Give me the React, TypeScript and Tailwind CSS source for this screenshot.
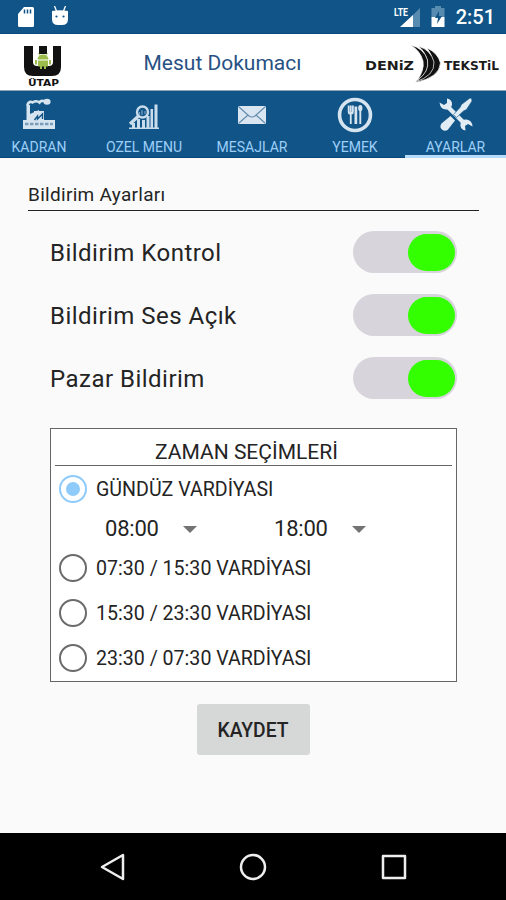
import { useState } from 'react';
import type { ReactNode } from 'react';

interface Tab {
  label: string;
  width: string;
  icon: ReactNode;
}

const tabs: Tab[] = [
  { label: 'KADRAN', width: 'w-[100px]', icon: <FactoryIcon /> },
  { label: 'OZEL MENU', width: 'w-[110px]', icon: <ChartIcon /> },
  { label: 'MESAJLAR', width: 'w-[106px]', icon: <MailIcon /> },
  { label: 'YEMEK', width: 'w-[100px]', icon: <MealIcon /> },
  { label: 'AYARLAR', width: 'w-[101px]', icon: <ToolsIcon /> },
];

const shifts = [
  '07:30 / 15:30 VARDİYASI',
  '15:30 / 23:30 VARDİYASI',
  '23:30 / 07:30 VARDİYASI',
];

function FactoryIcon() {
  return (
    <svg width="34" height="34" viewBox="0 0 34 34" fill="#d6e4f0">
      <path d="M1 22h3.500V7H8v9l9-4v4l2 6h14v9H1z" />
      <path d="M12 13h10v9H12z" />
      <path d="M5.500 6.500q2-4 5-2 4-2.500 7 0 1-2 4-1.500" fill="none" stroke="#d6e4f0" strokeWidth="2.600" strokeLinecap="round" />
      <ellipse cx="25" cy="3.800" rx="3.600" ry="3" />
      <path d="M3 26h28" stroke="#7b9cb9" strokeWidth="2.500" strokeDasharray="3.500 1.500" />
      <path d="m12.500 22 3-4v3l5-5v5" stroke="#115588" strokeWidth="1.400" fill="none" />
    </svg>
  );
}

function ChartIcon() {
  return (
    <svg width="34" height="34" viewBox="0 0 34 34" fill="#c9dcec">
      <path d="M2 29.500h30V31H2zM5 25h3v5H5zM10 21h3v9h-3zM15 22h3v8h-3zM19.500 18h3v12h-3zM23.500 11h2.500v19h-2.500zM27.500 6.500h3V30h-3z" />
      <circle cx="15.500" cy="14" r="5.500" fill="#115588" stroke="#c9dcec" strokeWidth="2.400" />
      <path d="m11.500 18-8.500 8" stroke="#c9dcec" strokeWidth="3.200" />
      <path d="M12.500 16.500V14m2.500 3v-5m3 4v-3" stroke="#7ba2c2" strokeWidth="1.200" />
    </svg>
  );
}

function MailIcon() {
  return (
    <svg width="34" height="34" viewBox="0 0 34 34">
      <rect x="3" y="8" width="28" height="18" rx="1.500" fill="#d9e6f1" />
      <path d="m4 9 10 9q3 2 6 0l10-9M4 25l9-8m8 0 9 8" fill="none" stroke="#648aab" strokeWidth="1.100" />
    </svg>
  );
}

function MealIcon() {
  return (
    <svg width="36" height="36" viewBox="0 0 34 34" fill="none" stroke="#d6e4f0">
      <circle cx="17" cy="17" r="14.600" strokeWidth="3.400" />
      <path d="M11 8v6q0 2 2 2t2-2V8M13 8v17.500" strokeWidth="1.700" />
      <path d="M17.800 25.500V9" strokeWidth="2.600" />
      <path d="M22 12v13.500" strokeWidth="1.800" />
      <ellipse cx="22" cy="10.500" rx="2" ry="3" fill="#d6e4f0" stroke="none" />
    </svg>
  );
}

function ToolsIcon() {
  return (
    <svg width="36" height="36" viewBox="0 0 36 36">
      <path d="m9 9 18 18" stroke="#e2ecf4" strokeWidth="4.500" />
      <path
        d="M1.500 5.500 6 8l3-2V1.500q5.500 1 5 6.500-1.500 5-6 4.500-5.500 0-6.500-7zM34.500 29.500 30 27l-3 2 .5 4.500q-6-1-5-7 1.500-4.500 6-4 5.500.5 6 7z"
        fill="#e2ecf4"
      />
      <path d="m33.500 1.500-1.500-.5-8.500 6.500-1.500 3-6.500 7 3 3 7-6.500 3-1.500L34 4z" fill="#e2ecf4" stroke="#115588" strokeWidth=".6" />
      <path d="m12.500 19 4.500 4.500-7 9q-3 2.500-6 0t-.5-6z" fill="#e2ecf4" />
    </svg>
  );
}

function StatusBar() {
  return (
    <div className="flex h-[34px] items-center justify-between border-b border-[#08457b] bg-[#115588] pt-px pr-[11px] pl-[17px]">
      <div className="flex items-center gap-4">
        <svg width="18" height="22" viewBox="0 0 18 22">
          <path d="M7 1h8.500Q17 1 17 2.500v17q0 1.500-1.500 1.500h-13Q1 21 1 19.500V8z" fill="#fff" />
          <path d="M7.500 3.500v4m3-4v4m3-4v4" stroke="#115588" strokeWidth="1.500" />
        </svg>
        <svg width="18" height="22" viewBox="0 0 18 22">
          <path d="m3.500 0 2 5m9-5-2 5" stroke="#fff" strokeWidth="1.300" />
          <path d="M1 5q8-1.500 16 0v8q0 6-6 6H7q-6 0-6-6z" fill="#fff" />
          <circle cx="5.500" cy="10.500" r="1.100" fill="#115588" />
          <circle cx="12.500" cy="10.500" r="1.100" fill="#115588" />
        </svg>
      </div>
      <div className="flex items-center">
        <svg width="26" height="22" viewBox="0 0 26 22" className="mr-2.5">
          <path d="M26 2v19H7z" fill="#588bb0" />
          <path d="M19 9v12H6z" fill="#fff" />
          <path d="M0 0h15v11H0z" fill="#115588" />
          <text x="0" y="10" fontSize="11" fontWeight="700" fontFamily="Roboto, sans-serif" fill="#fff" textLength="14" lengthAdjust="spacingAndGlyphs">
            LTE
          </text>
        </svg>
        <svg width="16" height="22" viewBox="0 0 16 22" className="mr-2.5">
          <path d="M5 0h6v2h3.500v9h-13V2H5z" fill="#588bb0" />
          <path d="M1.500 11h13v10h-13z" fill="#fff" />
          <path d="m9 5-4 7h3l-1 6 5-8H9z" fill="#115588" />
        </svg>
        <span className="text-[20px] leading-none font-medium text-white">2:51</span>
      </div>
    </div>
  );
}

function UtapLogo() {
  return (
    <svg width="40" height="46" viewBox="0 0 40 46" className="mt-1.5 ml-[23px]">
      <path d="M1 4h9v16q0 4 4 4h12q4 0 4-4V4h8v21q0 9-9 9H10q-9 0-9-9z" fill="#111" />
      <path d="M16 4h8v8h-8z" fill="#111" />
      <path d="M14.500 17.500a5.500 5 0 0 1 11 0zM15 18.500h10v6h-2V27h-2v-2.500h-2V27h-2v-2.500h-2zM12 18h2v4.500h-2zM26 18h2v4.500h-2z" fill="#9bbd4b" />
      <path d="m15.500 11 1.500 3m7.500-3L23 14" stroke="#9bbd4b" strokeWidth=".8" />
      <text x="5" y="43.500" fontSize="9.500" fontWeight="700" fontFamily="'DejaVu Sans', sans-serif" fill="#111" textLength="31" lengthAdjust="spacingAndGlyphs">
        ÜTAP
      </text>
    </svg>
  );
}

function DenizLogo() {
  return (
    <svg width="140" height="42" viewBox="0 0 140 42" className="mt-px mr-1">
      <g fontSize="12" fontWeight="700" fontFamily="'DejaVu Sans', sans-serif" fill="#1b1b1b">
        <text x="3" y="28" textLength="49" lengthAdjust="spacingAndGlyphs">DENiZ</text>
        <text x="82" y="28" textLength="55" lengthAdjust="spacingAndGlyphs">TEKSTiL</text>
      </g>
      <g fill="#111" stroke="#fff" strokeWidth=".7">
        <path d="M65 6q11 5 13.500 15-1 15-26 19.500Q70 33 71 21q-.5-8-6-15z" />
        <path d="M56 4q13 4 16 16 1 14-19 20 14-10 12.500-21Q63 9 56 4z" />
        <path d="M48 3q14 3 17.500 15 2 12-10 20 7-10 5.500-19Q58 8 48 3z" />
      </g>
    </svg>
  );
}

function TabBar() {
  return (
    <nav className="flex h-[67px] overflow-hidden bg-[#115588]">
      {tabs.map((tab, i) => (
        <button
          key={tab.label}
          className={`flex shrink-0 flex-col items-center ${tab.width} ${i === 0 ? '-ml-[11px]' : ''} ${
            i === tabs.length - 1 ? 'border-b-[3px] border-[#b5ddfb]' : 'border-b border-[#08457b]'
          }`}
        >
          <span className="mt-1.5 flex h-9 items-center">{tab.icon}</span>
          <span className="mt-1.5 text-[14px] leading-4 whitespace-nowrap text-[#9dcff8]">{tab.label}</span>
        </button>
      ))}
    </nav>
  );
}

function ToggleRow({ label }: { label: string }) {
  const [on, setOn] = useState(true);

  return (
    <div className="flex h-[63px] items-center justify-between">
      <span className="pt-px text-[24px] tracking-[0.48px]">{label}</span>
      <button
        role="switch"
        aria-checked={on}
        aria-label={label}
        onClick={() => setOn(!on)}
        className={`mb-px flex h-[42px] w-[104px] items-center rounded-full bg-[#d7d4dc] px-0.5 ${
          on ? 'justify-end' : 'justify-start'
        }`}
      >
        <span className={`h-[37px] w-[47px] rounded-full ${on ? 'bg-[#33ff00]' : 'bg-[#9b99a0]'}`} />
      </button>
    </div>
  );
}

function Radio({ label, checked, onSelect }: { label: string; checked: boolean; onSelect: () => void }) {
  return (
    <button role="radio" aria-checked={checked} onClick={onSelect} className="flex h-[45px] items-center gap-[9px]">
      <span
        className={`flex size-7 items-center justify-center rounded-full border-2 ${
          checked ? 'border-[#8fcbfa]' : 'border-[#6b6b6b]'
        }`}
      >
        {checked && <span className="size-3.5 rounded-full bg-[#8fcbfa]" />}
      </span>
      <span className="pt-0.5 text-[19.6px]">{label}</span>
    </button>
  );
}

function TimeSelect({ value }: { value: string }) {
  return (
    <button className="flex w-[169px] items-center gap-6 text-[22px] leading-none tracking-[-0.2px]">
      {value}
      <svg width="14" height="7" viewBox="0 0 14 7">
        <path d="M0 0h14L7 7z" fill="#737373" />
      </svg>
    </button>
  );
}

export default function App() {
  const [shift, setShift] = useState('GÜNDÜZ VARDİYASI');

  return (
    <div className="flex h-[900px] w-[506px] flex-col overflow-hidden bg-[#fafafa] font-[Roboto,sans-serif] text-[#242424]">
      <StatusBar />
      <header className="flex h-[57px] items-center justify-between border-b border-[#8fa3b5] bg-white">
        <UtapLogo />
        <h1 className="mt-[3px] ml-5 text-[21px] text-[#285184]">Mesut Dokumacı</h1>
        <DenizLogo />
      </header>
      <TabBar />

      <main className="flex flex-1 flex-col">
        <h2 className="mr-[27px] ml-7 mt-6 h-[29px] border-b-[1.5px] border-[#222] text-[19px] leading-[26px] tracking-[0.3px]">
          Bildirim Ayarları
        </h2>
        <section className="mt-[10px] pr-[49px] pl-[50px]">
          <ToggleRow label="Bildirim Kontrol" />
          <ToggleRow label="Bildirim Ses Açık" />
          <ToggleRow label="Pazar Bildirim" />
        </section>

        <section className="mt-[18px] mr-[49px] ml-[50px] h-[254px] border border-[#666] bg-white">
          <h3 className="mx-1 h-[37px] border-b border-[#666] pt-[9px] pr-3.5 text-center text-[21px] leading-[28px]">
            ZAMAN SEÇİMLERİ
          </h3>
          <div className="flex flex-col pl-2">
            <Radio label="GÜNDÜZ VARDİYASI" checked={shift === 'GÜNDÜZ VARDİYASI'} onSelect={() => setShift('GÜNDÜZ VARDİYASI')} />
            <div className="flex h-[34px] items-center pt-0.5 pl-[46px]">
              <TimeSelect value="08:00" />
              <TimeSelect value="18:00" />
            </div>
            {shifts.map((s) => (
              <Radio key={s} label={s} checked={shift === s} onSelect={() => setShift(s)} />
            ))}
          </div>
        </section>

        <button className="mt-[22px] h-[51px] w-[113px] self-center rounded-[3px] bg-[#d6d7d7] pt-[3px] text-[19.3px] font-medium">
          KAYDET
        </button>
      </main>

      <nav className="flex h-[67px] items-center justify-around bg-black pr-[42px] pl-[43px]">
        <svg width="28" height="28" viewBox="0 0 28 28" fill="none" stroke="#eee" strokeWidth="2.500" strokeLinejoin="round">
          <path d="M24 2v24L3 14z" />
        </svg>
        <svg width="28" height="28" viewBox="0 0 28 28" fill="none" stroke="#eee" strokeWidth="2.500">
          <circle cx="14" cy="14" r="12" />
        </svg>
        <svg width="28" height="28" viewBox="0 0 28 28" fill="none" stroke="#eee" strokeWidth="2.500" strokeLinejoin="round">
          <path d="M3 3h22v22H3z" />
        </svg>
      </nav>
    </div>
  );
}
